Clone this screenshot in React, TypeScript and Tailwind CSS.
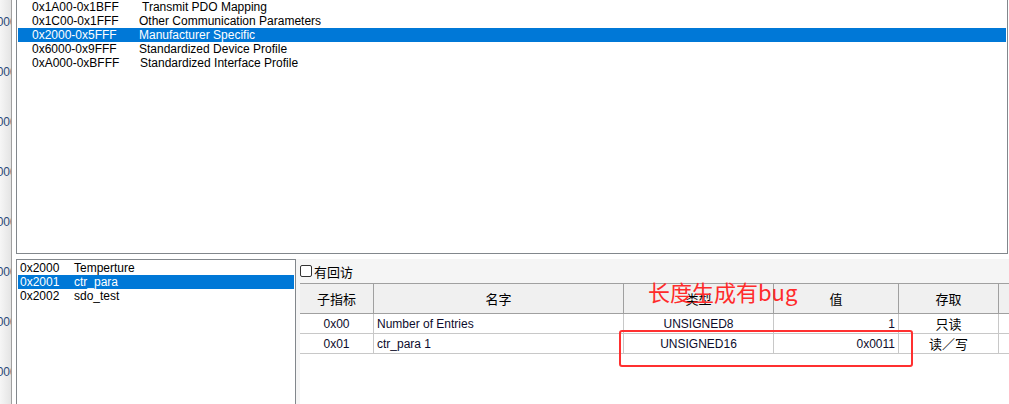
import React from 'react';

const ranges = [
  { range: '0x1A00-0x1BFF', name: 'Transmit PDO Mapping', pad: 'pl-[3px]' },
  { range: '0x1C00-0x1FFF', name: 'Other Communication Parameters', pad: 'pl-0' },
  { range: '0x2000-0x5FFF', name: 'Manufacturer Specific', pad: 'pl-0', selected: true },
  { range: '0x6000-0x9FFF', name: 'Standardized Device Profile', pad: 'pl-0' },
  { range: '0xA000-0xBFFF', name: 'Standardized Interface Profile', pad: 'pl-[1px]' },
];

const objects = [
  { index: '0x2000', name: 'Temperture', pad: 'pl-0' },
  { index: '0x2001', name: 'ctr_para', pad: 'pl-0', selected: true },
  { index: '0x2002', name: 'sdo_test', pad: 'pl-[-1px]' },
];

const subRows = [
  { sub: '0x00', name: 'Number of Entries', type: 'UNSIGNED8', value: '1', access: '只读' },
  { sub: '0x01', name: 'ctr_para 1', type: 'UNSIGNED16', value: '0x0011', access: '读／写' },
];

const cols = 'grid grid-cols-[74px_250px_150px_125px_100px_1fr]';
const cjk = "font-['Noto_Sans_CJK_SC',sans-serif]";

const App = () => {
  return (
    <div className="relative w-[1009px] h-[404px] overflow-hidden bg-white flex font-['Liberation_Sans',sans-serif] text-[12px] text-black">
      {/* Left clipped strip */}
      <div className="w-[12px] h-full shrink-0 overflow-hidden border-r border-[#a0a0a0] bg-gradient-to-r from-[#f6f6f6] to-[#e4e4e4] pt-[15px]">
        {Array.from({ length: 8 }).map((_, i) => (
          <div key={i} className="h-[50px] leading-[14px] ml-[-10px] whitespace-nowrap text-[#2c4a78]">0000</div>
        ))}
      </div>

      <div className="flex-1 flex flex-col pl-[4px] min-w-0">
        {/* Top list box */}
        <div className="mt-[-2px] h-[256px] w-[992px] shrink-0 border border-[#82878c] p-px">
          {ranges.map((r) => (
            <div
              key={r.range}
              className={`flex h-[14px] leading-[14px] whitespace-nowrap ${r.selected ? 'bg-[#0078d7] text-white' : ''}`}
            >
              <span className="w-[121px] pl-[14px] shrink-0">{r.range}</span>
              <span className={r.pad}>{r.name}</span>
            </div>
          ))}
        </div>

        {/* Bottom area */}
        <div className="flex flex-1 mt-[5px] min-h-0">
          <div className="w-[280px] shrink-0 border border-[#82878c] border-b-0 p-px">
            {objects.map((o) => (
              <div
                key={o.index}
                className={`flex h-[14px] leading-[14px] whitespace-nowrap ${o.selected ? 'bg-[#0078d7] text-white' : ''}`}
              >
                <span className="w-[56px] pl-[2px] shrink-0">{o.index}</span>
                <span className={o.pad}>{o.name}</span>
              </div>
            ))}
          </div>

          <div className="flex-1 flex flex-col bg-[#f5f5f5] pl-[4px]">
            {/* Checkbox row */}
            <div className="h-[24px] flex items-center gap-[2px] shrink-0">
              <span className="w-[12px] h-[12px] rounded-[2px] border border-[#333] bg-white"></span>
              <span className={`${cjk} text-[13px] leading-[16px] mt-[2px]`}>有回访</span>
            </div>

            {/* Table */}
            <div className="flex-1 bg-white">
              <div className={`${cols} h-[31px] bg-[#f0f0f0] border-t border-b border-[#a0a0a0] ${cjk} text-[13px]`}>
                <div className="flex items-center justify-center border-r border-[#a0a0a0]">子指标</div>
                <div className="flex items-center justify-center border-r border-[#a0a0a0]">名字</div>
                <div className="flex items-center justify-center border-r border-[#a0a0a0]">类型</div>
                <div className="flex items-center justify-center border-r border-[#a0a0a0]">值</div>
                <div className="flex items-center justify-center border-r border-[#a0a0a0]">存取</div>
                <div></div>
              </div>
              {subRows.map((r) => (
                <div key={r.sub} className={`${cols} h-[20px] border-b border-[#c8c8c8] text-[#0c0c2c]`}>
                  <div className="flex items-center justify-center border-r border-[#c8c8c8]">{r.sub}</div>
                  <div className="flex items-center pl-[3px] border-r border-[#c8c8c8]">{r.name}</div>
                  <div className="flex items-center justify-center border-r border-[#c8c8c8]">{r.type}</div>
                  <div className="flex items-center justify-end pr-[3px] border-r border-[#c8c8c8]">{r.value}</div>
                  <div className={`flex items-center justify-center border-r border-[#c8c8c8] ${cjk} text-[13px] text-black`}>{r.access}</div>
                  <div></div>
                </div>
              ))}
            </div>
          </div>
        </div>
      </div>

      {/* Red annotation */}
      <div className={`absolute left-[648px] top-[278px] ${cjk} text-[22px] leading-[26px] text-[#ff2b2b] whitespace-nowrap`}>
        长度生成有bug
      </div>
      <div className="absolute left-[619px] top-[330px] w-[294px] h-[37px] border-2 border-[#ff3030] rounded-[3px]"></div>
    </div>
  );
};

export default App;
